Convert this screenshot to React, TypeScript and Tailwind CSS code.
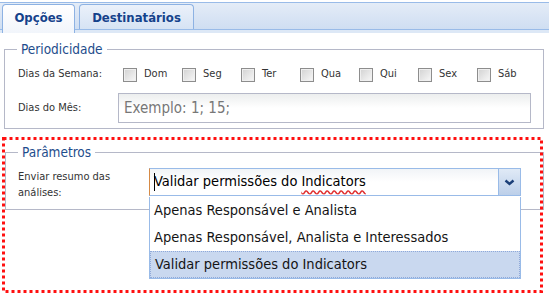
const days = ["Dom", "Seg", "Ter", "Qua", "Qui", "Sex", "Sáb"];

const options = [
  "Apenas Responsável e Analista",
  "Apenas Responsável, Analista e Interessados",
  "Validar permissões do Indicators",
];

function Checkbox() {
  return (
    <span className="w-[14px] h-[14px] shrink-0 border border-[#8d8d8d] bg-gradient-to-br from-[#d2d2d2] to-[#f8f8f8] shadow-[inset_0_0_0_1px_#efefef]" />
  );
}

export default function App() {
  return (
    <div className="w-[549px] h-[304px] bg-white overflow-hidden text-[#333] font-['DejaVu_Sans_Condensed','DejaVu_Sans',sans-serif]">
      {/* Tabs */}
      <div className="pt-[2px]">
        <div className="h-[28px] border-y border-[#99bbe8] bg-gradient-to-b from-[#e4ecf7] to-[#cfdef2] flex items-end gap-[4px] pl-[2px]">
          <div className="relative z-10 -mb-[4px] h-[29px] w-[73px] flex justify-center pt-[4px] border border-b-0 border-[#8db2e3] rounded-t-[4px] bg-gradient-to-b from-white to-[#f1f5fb] text-[13px] leading-[18px] font-bold text-[#15428b]">
            Opções
          </div>
          <div className="h-[25px] w-[115px] flex justify-center pt-[4px] border border-b-0 border-[#8db2e3] rounded-t-[4px] bg-gradient-to-b from-[#ebf1fa] to-[#d6e3f4] text-[13px] leading-[18px] font-bold text-[#15428b]">
            Destinatários
          </div>
        </div>
        <div className="h-[3px] bg-[#dde8f6]" />
      </div>

      {/* Periodicidade */}
      <fieldset className="ml-[4px] mt-[8px] w-[540px] border border-[#b5b8c8] pl-[12px] pb-[5px]">
        <legend className="px-[4px] text-[13.5px] leading-[16px] text-[#1e4d8c]">Periodicidade</legend>
        <div className="mt-[8px] h-[19px] flex items-center pl-[1px] text-[11px]">
          <span className="w-[105px]">Dias da Semana:</span>
          {days.map((d) => (
            <label key={d} className="w-[59px] flex items-center gap-[7px]">
              <Checkbox />
              <span>{d}</span>
            </label>
          ))}
        </div>
        <div className="mt-[9px] h-[30px] flex items-center pl-[1px]">
          <span className="w-[100px] text-[11px]">Dias do Mês:</span>
          <div className="w-[413px] h-[30px] border border-[#b5b8c8] bg-gradient-to-b from-[#eceeee] via-white to-white flex items-center pl-[5px] text-[15px] text-[#777]">
            Exemplo: 1; 15;
          </div>
        </div>
      </fieldset>

      {/* Highlighted parameters */}
      <div className="relative ml-[2px] mt-[8px] pt-[7px] w-[541px] h-[156px]">
        <fieldset className="ml-[3px] w-[539px] border border-[#b5b8c8] pl-[12px] pb-[7px]">
          <legend className="px-[4px] text-[13.5px] leading-[16px] text-[#1e4d8c]">Parâmetros</legend>
          <div className="mt-[8px] h-[34px] flex items-start">
            <div className="w-[131px] pt-[1px] text-[11px] leading-[16px]">
              Enviar resumo das
              <br />
              análises:
            </div>
            <div className="relative w-[372px] h-[28px]">
              <div className="h-full flex border border-[#99bbe8] border-l-[#d68a45] bg-gradient-to-b from-[#f1f4f7] via-white to-white">
                <div className="relative flex-1 flex items-center pl-[4px] text-[14.5px] text-black">
                  <span className="absolute left-[4px] top-[4px] w-[1px] h-[18px] bg-black" />
                  Validar permissões do{" "}
                  <span className="ml-[4px] underline decoration-wavy decoration-[#e03030] underline-offset-[3px]">Indicators</span>
                </div>
                <div className="w-[22px] h-full flex items-center justify-center border-l border-[#99bbe8] bg-gradient-to-b from-[#e0eaf6] to-[#bccfe9]">
                  <svg width="11" height="7" viewBox="0 0 11 7">
                    <path d="M1.5 1.5 L5.5 5 L9.5 1.5" fill="none" stroke="#1b3f78" strokeWidth="2.4" />
                  </svg>
                </div>
              </div>
              <div className="absolute left-0 top-[29px] z-10 w-[372px] border border-t-0 border-[#99bbe8] bg-white text-[14.5px] text-[#141414]">
                {options.map((o, i) => (
                  <div
                    key={o}
                    className={`h-[27px] flex items-center pl-[4px] ${
                      i === 2 ? "bg-[#c9d8ef] border border-dotted border-[#8fa9d9] pl-[3px]" : ""
                    }`}
                  >
                    {o}
                  </div>
                ))}
              </div>
            </div>
          </div>
        </fieldset>
        <svg className="absolute inset-0 pointer-events-none z-20" width="541" height="156">
          <rect x="1.5" y="1.5" width="538" height="153" fill="none" stroke="#ff1010" strokeWidth="3" strokeDasharray="3 3" />
        </svg>
      </div>
    </div>
  );
}
